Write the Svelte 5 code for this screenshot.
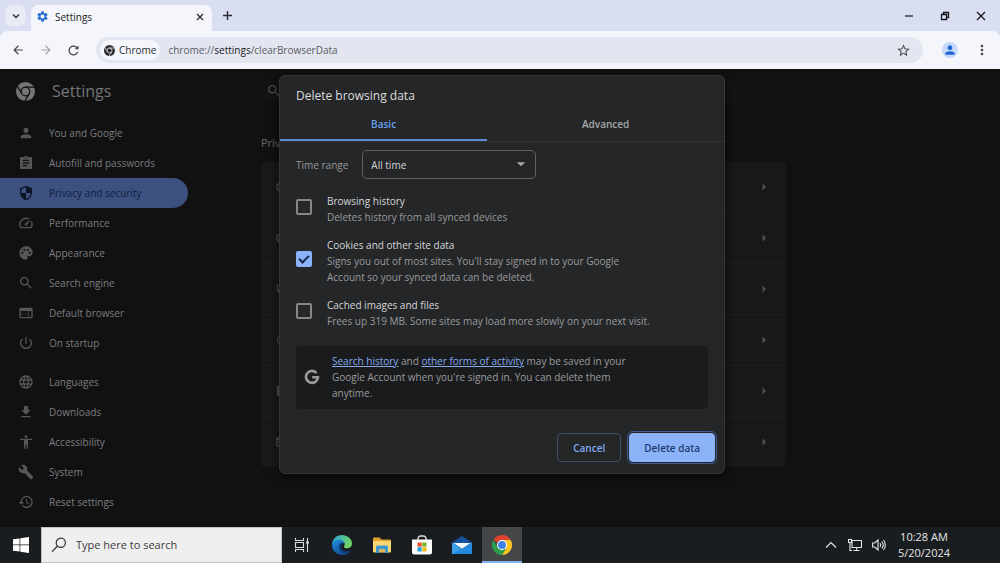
<script lang="ts">
    const icons = {
        person: 'M12 12c2.21 0 4-1.79 4-4s-1.79-4-4-4-4 1.79-4 4 1.79 4 4 4zm0 2c-2.67 0-8 1.34-8 4v2h16v-2c0-2.66-5.33-4-8-4z',
        assignment: 'M19 3h-4.18C14.4 1.84 13.3 1 12 1c-1.3 0-2.4.84-2.82 2H5c-1.1 0-2 .9-2 2v14c0 1.1.9 2 2 2h14c1.1 0 2-.9 2-2V5c0-1.1-.9-2-2-2zm-7 0c.55 0 1 .45 1 1s-.45 1-1 1-1-.45-1-1 .45-1 1-1zm2 14H7v-2h7v2zm3-4H7v-2h10v2zm0-4H7V7h10v2z',
        security: 'M12 1L3 5v6c0 5.55 3.84 10.74 9 12 5.16-1.26 9-6.45 9-12V5l-9-4zm0 10.99h7c-.53 4.12-3.28 7.79-7 8.94V12H5V6.3l7-3.11v8.8z',
        speed: 'M20.38 8.57l-1.23 1.85a8 8 0 0 1-.22 7.58H5.07A8 8 0 0 1 15.58 6.85l1.85-1.23A10 10 0 0 0 3.35 19a2 2 0 0 0 1.72 1h13.85a2 2 0 0 0 1.74-1 10 10 0 0 0-.27-10.44zm-9.79 6.84a2 2 0 0 0 2.83 0l5.66-8.49-8.49 5.66a2 2 0 0 0 0 2.83z',
        palette: 'M12 2C6.49 2 2 6.49 2 12s4.49 10 10 10c1.38 0 2.5-1.12 2.5-2.5 0-.61-.23-1.2-.64-1.67-.08-.1-.13-.21-.13-.33 0-.28.22-.5.5-.5H16c3.31 0 6-2.69 6-6 0-4.96-4.49-9-10-9zm5.5 11c-.83 0-1.5-.67-1.5-1.5s.67-1.5 1.5-1.5 1.5.67 1.5 1.5-.67 1.5-1.5 1.5zm-3-4c-.83 0-1.5-.67-1.5-1.5S13.67 6 14.5 6s1.5.67 1.5 1.5S15.33 9 14.5 9zM5 11.5c0-.83.67-1.5 1.5-1.5s1.5.67 1.5 1.5S7.33 13 6.5 13 5 12.33 5 11.5zm6-4c0 .83-.67 1.5-1.5 1.5S8 8.33 8 7.5 8.67 6 9.5 6s1.5.67 1.5 1.5z',
        search: 'M15.5 14h-.79l-.28-.27C15.41 12.59 16 11.11 16 9.5 16 5.91 13.09 3 9.5 3S3 5.91 3 9.5 5.91 16 9.5 16c1.61 0 3.09-.59 4.23-1.57l.27.28v.79l5 4.99L20.49 19l-4.99-5zm-6 0C7.01 14 5 11.99 5 9.5S7.01 5 9.5 5 14 7.01 14 9.5 11.99 14 9.5 14z',
        web: 'M20 4H4c-1.1 0-1.99.9-1.99 2L2 18c0 1.1.9 2 2 2h16c1.1 0 2-.9 2-2V6c0-1.1-.9-2-2-2zm-5 14H4v-4h11v4zm0-5H4V9h11v4zm5 5h-4V9h4v9z',
        power: 'M13 3h-2v10h2V3zm4.83 2.17l-1.42 1.42C17.99 7.86 19 9.81 19 12c0 3.87-3.13 7-7 7s-7-3.13-7-7c0-2.19 1.01-4.14 2.58-5.42L6.17 5.17C4.23 6.82 3 9.26 3 12c0 4.97 4.03 9 9 9s9-4.03 9-9c0-2.74-1.23-5.18-3.17-6.83z',
        language: 'M11.99 2C6.47 2 2 6.48 2 12s4.47 10 9.99 10C17.52 22 22 17.52 22 12S17.52 2 11.99 2zm6.93 6h-2.95c-.32-1.25-.78-2.45-1.38-3.56 1.84.63 3.37 1.91 4.33 3.56zM12 4.04c.83 1.2 1.48 2.53 1.91 3.96h-3.82c.43-1.43 1.08-2.76 1.91-3.96zM4.26 14C4.1 13.36 4 12.69 4 12s.1-1.36.26-2h3.38c-.08.66-.14 1.32-.14 2s.06 1.34.14 2H4.26zm.82 2h2.95c.32 1.25.78 2.45 1.38 3.56-1.84-.63-3.37-1.9-4.33-3.56zm2.95-8H5.08c.96-1.66 2.49-2.93 4.33-3.56C8.81 5.55 8.35 6.75 8.03 8zM12 19.96c-.83-1.2-1.48-2.53-1.91-3.96h3.82c-.43 1.43-1.08 2.76-1.91 3.96zM14.34 14H9.66c-.09-.66-.16-1.32-.16-2s.07-1.35.16-2h4.68c.09.65.16 1.32.16 2s-.07 1.34-.16 2zm.25 5.56c.6-1.11 1.06-2.31 1.38-3.56h2.95c-.96 1.65-2.49 2.93-4.33 3.56zM16.36 14c.08-.66.14-1.32.14-2s-.06-1.34-.14-2h3.38c.16.64.26 1.31.26 2s-.1 1.36-.26 2h-3.38z',
        download: 'M19 9h-4V3H9v6H5l7 7 7-7zM5 18v2h14v-2H5z',
        accessibility: 'M12 2c1.1 0 2 .9 2 2s-.9 2-2 2-2-.9-2-2 .9-2 2-2zm9 7h-6v13h-2v-6h-2v6H9V9H3V7h18v2z',
        build: 'M22.7 19l-9.1-9.1c.9-2.3.4-5-1.5-6.9-2-2-5-2.4-7.4-1.3L9 6 6 9 1.6 4.7C.4 7.1.9 10.1 2.9 12.1c1.9 1.9 4.6 2.4 6.9 1.5l9.1 9.1c.4.4 1 .4 1.4 0l2.3-2.3c.5-.4.5-1.1.1-1.4z',
        restore: 'M13 3c-4.97 0-9 4.03-9 9H1l3.89 3.89.07.14L9 12H6c0-3.87 3.13-7 7-7s7 3.13 7 7-3.13 7-7 7c-1.93 0-3.68-.79-4.94-2.06l-1.42 1.42C8.27 19.99 10.51 21 13 21c4.97 0 9-4.03 9-9s-4.03-9-9-9zm-1 5v5l4.28 2.54.72-1.21-3.5-2.08V8H12z',
        gear: 'M19.14 12.94c.04-.3.06-.61.06-.94 0-.32-.02-.64-.07-.94l2.03-1.58c.18-.14.23-.41.12-.61l-1.92-3.32c-.12-.22-.37-.29-.59-.22l-2.39.96c-.5-.38-1.03-.7-1.62-.94l-.36-2.54c-.04-.24-.24-.41-.48-.41h-3.84c-.24 0-.43.17-.47.41l-.36 2.54c-.59.24-1.13.57-1.62.94l-2.39-.96c-.22-.08-.47 0-.59.22L2.74 8.87c-.12.21-.08.47.12.61l2.03 1.58c-.05.3-.09.63-.09.94s.02.64.07.94l-2.03 1.58c-.18.14-.23.41-.12.61l1.92 3.32c.12.22.37.29.59.22l2.39-.96c.5.38 1.03.7 1.62.94l.36 2.54c.05.24.24.41.48.41h3.84c.24 0 .44-.17.47-.41l.36-2.54c.59-.24 1.13-.56 1.62-.94l2.39.96c.22.08.47 0 .59-.22l1.92-3.32c.12-.22.07-.47-.12-.61l-2.01-1.58zM12 15.6c-1.98 0-3.6-1.62-3.6-3.6s1.62-3.6 3.6-3.6 3.6 1.62 3.6 3.6-1.62 3.6-3.6 3.6z',
        back: 'M20 11H7.83l5.59-5.59L12 4l-8 8 8 8 1.41-1.41L7.83 13H20v-2z',
        forward: 'M12 4l-1.41 1.41L16.17 11H4v2h12.17l-5.58 5.59L12 20l8-8z',
        reload: 'M17.65 6.35C16.2 4.9 14.21 4 12 4c-4.42 0-7.99 3.58-7.99 8s3.57 8 7.99 8c3.73 0 6.84-2.55 7.73-6h-2.08c-.82 2.33-3.04 4-5.65 4-3.31 0-6-2.69-6-6s2.69-6 6-6c1.66 0 3.14.69 4.22 1.78L14 10h6V4l-2.35 2.35z',
        star: 'M22 9.24l-7.19-.62L12 2 9.19 8.63 2 9.24l5.46 4.73L5.82 21 12 17.27 18.18 21l-1.63-7.03L22 9.24zM12 15.4l-3.76 2.27 1-4.28-3.32-2.88 4.38-.38L12 6.1l1.71 4.04 4.38.38-3.32 2.88 1 4.28L12 15.4z',
        dots: 'M12 8c1.1 0 2-.9 2-2s-.9-2-2-2-2 .9-2 2 .9 2 2 2zm0 2c-1.1 0-2 .9-2 2s.9 2 2 2 2-.9 2-2-.9-2-2-2zm0 6c-1.1 0-2 .9-2 2s.9 2 2 2 2-.9 2-2-.9-2-2-2z',
        dropdown: 'M5 9l7 7 7-7z',
        arrowRight: 'M9 5v14l7-7z'
    };

    const mainLinks = [
        { text: 'You and Google', icon: icons.person },
        { text: 'Autofill and passwords', icon: icons.assignment },
        { text: 'Privacy and security', icon: icons.security },
        { text: 'Performance', icon: icons.speed },
        { text: 'Appearance', icon: icons.palette },
        { text: 'Search engine', icon: icons.search },
        { text: 'Default browser', icon: icons.web },
        { text: 'On startup', icon: icons.power }
    ];

    const moreLinks = [
        { text: 'Languages', icon: icons.language },
        { text: 'Downloads', icon: icons.download },
        { text: 'Accessibility', icon: icons.accessibility },
        { text: 'System', icon: icons.build },
        { text: 'Reset settings', icon: icons.restore }
    ];

    const rowIcons = [icons.language, icons.language, icons.security, icons.power, icons.assignment, icons.web];

    let selectedLink = $state('Privacy and security');
    let selectedTab = $state('Basic');
    let timeRange = $state('All time');

    let options = $state([
        { id: 'history', title: 'Browsing history', text: 'Deletes history from all synced devices', checked: false },
        { id: 'cookies', title: 'Cookies and other site data', text: "Signs you out of most sites. You'll stay signed in to your Google Account so your synced data can be deleted.", checked: true },
        { id: 'cache', title: 'Cached images and files', text: 'Frees up 319 MB. Some sites may load more slowly on your next visit.', checked: false }
    ]);
</script>

{#snippet icon(path: string, size = 16)}
    <svg width={size} height={size} viewBox="0 0 24 24" fill="currentColor" aria-hidden="true"><path d={path} /></svg>
{/snippet}

{#snippet chromeMark(id: string, size: number)}
    <svg width={size} height={size} viewBox="0 0 24 24" aria-hidden="true">
        <mask {id}>
            <circle cx="12" cy="12" r="12" fill="#fff" />
            <g fill="none" stroke="#000" stroke-width="1.6">
                <circle cx="12" cy="12" r="5.4" />
                <path d="M12 6.6H24M7.3 14.7L1.3 4.3M16.7 14.7L10.7 25.1" />
            </g>
        </mask>
        <rect width="24" height="24" fill="currentColor" mask="url(#{id})" />
    </svg>
{/snippet}

{#snippet menu(links: { text: string; icon: string }[])}
    <ul>
        {#each links as link}
            <li>
                <a href="#settings" class:marked={selectedLink === link.text} onclick={() => (selectedLink = link.text)}>
                    {@render icon(link.icon)}
                    <span>{link.text}</span>
                </a>
            </li>
        {/each}
    </ul>
{/snippet}

<div class="screen">
    <header>
        <div class="tabstrip">
            <button class="tab-search" aria-label="Search tabs">
                <svg width="8" height="8" viewBox="0 0 8 8" fill="none" stroke="currentColor" stroke-width="1.4"><path d="M1 2.5l3 3 3-3" /></svg>
            </button>
            <div class="tab">
                <span class="gear">{@render icon(icons.gear, 13)}</span>
                <span class="tab-title">Settings</span>
                <button aria-label="Close tab">
                    <svg width="8" height="8" viewBox="0 0 8 8" stroke="currentColor" stroke-width="1.3"><path d="M1 1l6 6M7 1L1 7" /></svg>
                </button>
            </div>
            <button class="new-tab" aria-label="New tab">
                <svg width="9" height="9" viewBox="0 0 9 9" stroke="currentColor" stroke-width="1.4"><path d="M4.5 0v9M0 4.5h9" /></svg>
            </button>
            <div class="window-buttons">
                <button aria-label="Minimize">
                    <svg width="10" height="10" viewBox="0 0 10 10" stroke="currentColor" stroke-width="1.2"><path d="M1 5h8" /></svg>
                </button>
                <button aria-label="Restore">
                    <svg width="10" height="10" viewBox="0 0 10 10" fill="none" stroke="currentColor" stroke-width="1.3"><path d="M1.5 3.5h5v5h-5zM3.5 3V1.5h5v5H7" /></svg>
                </button>
                <button aria-label="Close">
                    <svg width="10" height="10" viewBox="0 0 10 10" stroke="currentColor" stroke-width="1.2"><path d="M1 1l8 8M9 1L1 9" /></svg>
                </button>
            </div>
        </div>

        <div class="toolbar">
            <button aria-label="Back">{@render icon(icons.back, 14)}</button>
            <button aria-label="Forward" disabled>{@render icon(icons.forward, 14)}</button>
            <button aria-label="Reload">{@render icon(icons.reload, 15)}</button>
            <div class="omnibox">
                <span class="chip">{@render chromeMark('chip-mark', 11)}Chrome</span>
                <span class="url">chrome://<b>settings</b>/clearBrowserData</span>
                <button aria-label="Bookmark this tab">{@render icon(icons.star, 15)}</button>
            </div>
            <button class="avatar" aria-label="Profile">{@render icon(icons.person, 14)}</button>
            <button aria-label="More">{@render icon(icons.dots, 16)}</button>
        </div>
    </header>

    <div class="page">
        <aside>
            <h1>{@render chromeMark('page-mark', 19)}<span>Settings</span></h1>
            <nav>
                {@render menu(mainLinks)}
                {@render menu(moreLinks)}
            </nav>
        </aside>

        <main>
            <div class="page-search">{@render icon(icons.search)}</div>
            <h2>Privacy and security</h2>
            <div class="card">
                {#each rowIcons as rowIcon}
                    <div class="card-row">
                        {@render icon(rowIcon, 14)}
                        {@render icon(icons.arrowRight, 12)}
                    </div>
                {/each}
            </div>
        </main>

        <div class="overlay">
            <div class="modal" role="dialog" aria-labelledby="modal-title">
                <h2 id="modal-title">Delete browsing data</h2>
                <div class="tabs" role="tablist">
                    {#each ['Basic', 'Advanced'] as tab}
                        <button role="tab" aria-selected={selectedTab === tab} class={tab.toLowerCase()} class:current={selectedTab === tab} onclick={() => (selectedTab = tab)}>{tab}</button>
                    {/each}
                </div>

                <div class="modal-body">
                    <div class="range">
                        <label for="range">Time range</label>
                        <div class="select">
                            <select id="range" bind:value={timeRange}>
                                <option>Last hour</option>
                                <option>Last 24 hours</option>
                                <option>Last 7 days</option>
                                <option>Last 4 weeks</option>
                                <option>All time</option>
                            </select>
                            {@render icon(icons.dropdown, 14)}
                        </div>
                    </div>

                    <div class="options">
                        {#each options as option}
                            <div class="option">
                                <input type="checkbox" id={option.id} bind:checked={option.checked} />
                                <label for={option.id}>
                                    <strong>{option.title}</strong>
                                    <span>{option.text}</span>
                                </label>
                            </div>
                        {/each}
                    </div>

                    <div class="info">
                        <svg width="16" height="16" viewBox="0 0 16 16" fill="none" stroke="currentColor" stroke-width="2.6" aria-hidden="true">
                            <path d="M12.6 4A6 6 0 1 0 14 8.2H8.2" />
                        </svg>
                        <p>
                            <a href="#history">Search history</a> and <a href="#activity">other forms of activity</a> may be saved in your
                            Google Account when you're signed in. You can delete them anytime.
                        </p>
                    </div>

                    <div class="actions">
                        <button class="cancel">Cancel</button>
                        <button class="delete">Delete data</button>
                    </div>
                </div>
            </div>
        </div>
    </div>

    <footer>
        <button class="start" aria-label="Start">
            <svg width="16" height="16" viewBox="0 0 16 16" fill="#fff"><path d="M0 2.3l6.6-.9v6.2H0zM7.3 1.3L16 0v7.6H7.3zM0 8.3h6.6v6.3L0 13.7zM7.3 8.3H16V16l-8.7-1.3z" /></svg>
        </button>
        <label class="task-search">
            <svg width="16" height="16" viewBox="0 0 16 16" fill="none" stroke="#333" stroke-width="1.2"><circle cx="9.8" cy="5.8" r="4.6" /><path d="M6.5 9L1 14.6" /></svg>
            <input type="text" placeholder="Type here to search" />
        </label>
        <div class="apps">
            <button aria-label="Task View">
                <svg width="16" height="16" viewBox="0 0 16 16" fill="none" stroke="#dcdcdc" stroke-width="1.1">
                    <path d="M1.5 1v2.5h8V1M1.5 15v-2.5h8V15M1.5 5.5h8v5h-8zM13.5 1v14" /><path d="M12.2 5.5h2.6" stroke-width="2.4" />
                </svg>
            </button>
            <button aria-label="Microsoft Edge">
                <svg width="20" height="20" viewBox="0 0 20 20">
                    <defs>
                        <linearGradient id="edge-top" x1="0" y1="0" x2="1" y2="0.4"><stop offset="0" stop-color="#2aa5e0" /><stop offset="1" stop-color="#6fd562" /></linearGradient>
                        <linearGradient id="edge-low" x1="0" y1="0" x2="0.6" y2="1"><stop offset="0" stop-color="#1f8fe0" /><stop offset="1" stop-color="#114a94" /></linearGradient>
                    </defs>
                    <path d="M0 10C0 4 4.5 0 10 0s10 4 10 8.5c0 3-2.3 4.8-5 4.8-2.2 0-3.2-.8-3.2-1.5 0-.5.9-1 .9-2.3C12.7 7.4 10.7 6 8 6 4 6 1 8 0 10z" fill="url(#edge-top)" />
                    <path d="M0 10c.5-3.6 4-5.2 7-5.2 3.5 0 5.700 2 5.700 4.700C12 8.200 11 7.900 9.800 7.900 8 8.500 7 10 7 12c0 3.500 3 6 7 6 1.500 0 3-.5 4.200-1.400C16.400 18.700 13.500 20 10.300 20 4.500 20 0 15.500 0 10z" fill="url(#edge-low)" />
                    <path d="M9.800 7.900C8 8.500 7 10 7 12c0 3.500 3 6 7 6 1.500 0 3-.5 4.200-1.400.5-.6-.1-1.100-.7-.8-3.500 1.400-8.200.2-8.200-4 0-1.700.8-3 1.700-3.500a3 3 0 0 0-1.200-.4z" fill="#0d3f80" />
                </svg>
            </button>
            <button aria-label="File Explorer">
                <svg width="20" height="18" viewBox="0 0 20 18">
                    <path d="M1 2.5A1 1 0 0 1 2 1.5h5.5l2 2H18a1 1 0 0 1 1 1V9H1z" fill="#e0a030" />
                    <path d="M1 5h18v10.5a1 1 0 0 1-1 1H2a1 1 0 0 1-1-1z" fill="#f9d673" />
                    <path d="M4 17v-6a1.5 1.5 0 0 1 1.5-1.5h9A1.5 1.5 0 0 1 16 11v6h-3v-3.500H7V17z" fill="#3f97cf" />
                    <path d="M7 13.5h6v2.5H7z" fill="#e5b64b" />
                </svg>
            </button>
            <button aria-label="Microsoft Store">
                <svg width="20" height="20" viewBox="0 0 20 20">
                    <path d="M6 6V3.5A2.5 2.5 0 0 1 8.5 1h3A2.5 2.5 0 0 1 14 3.5V6" fill="none" stroke="#ddd" stroke-width="1.4" />
                    <path d="M0 4.5h20v13a2 2 0 0 1-2 2H2a2 2 0 0 1-2-2z" fill="#fafafa" />
                    <path d="M5.5 7.5h4.2v4.2H5.5z" fill="#e9512a" /><path d="M10.3 7.5h4.2v4.2h-4.2z" fill="#76b52c" />
                    <path d="M5.5 12.3h4.2v4.2H5.5z" fill="#1c9fe0" /><path d="M10.3 12.3h4.2v4.2h-4.2z" fill="#f9b61a" />
                </svg>
            </button>
            <button aria-label="Mail">
                <svg width="20" height="20" viewBox="0 0 20 20">
                    <path d="M0 7.5L10 1l10 6.5V12H0z" fill="#15509e" />
                    <path d="M0 7.5l10 6.7 10-6.7V19H0z" fill="#3ba0ea" />
                    <path d="M0 19l13-7L20 7.5V19z" fill="#2389dc" />
                    <path d="M1.5 8h17L10 13.8z" fill="#f2f8fd" />
                </svg>
            </button>
            <button class="running" aria-label="Google Chrome">
                <svg width="20" height="20" viewBox="0 0 24 24">
                    <path d="M12 12L1.6 6A12 12 0 0 1 22.4 6z" fill="#e0412f" />
                    <path d="M12 6h10.4A12 12 0 0 1 12 24l5.2-9z" fill="#fbc524" />
                    <path d="M6.8 15L1.6 6A12 12 0 0 0 12 24l5.2-9z" fill="#2d9c4c" />
                    <circle cx="12" cy="12" r="6" fill="#fff" />
                    <circle cx="12" cy="12" r="4.7" fill="#3d7fe8" />
                </svg>
            </button>
        </div>
        <div class="tray">
            <button aria-label="Show hidden icons">
                <svg width="12" height="12" viewBox="0 0 12 12" fill="none" stroke="currentColor" stroke-width="1.2"><path d="M1 8.5l5-5 5 5" /></svg>
            </button>
            <button aria-label="Network">
                <svg width="14" height="14" viewBox="0 0 14 14" fill="none" stroke="currentColor" stroke-width="1.1"><path d="M4 2.5h9.5v7H4zM8.7 9.5v3M5.5 12.5h6M.5 1.5h3v3h-3zM2 4.5v8h2" /></svg>
            </button>
            <button aria-label="Volume">
                <svg width="14" height="14" viewBox="0 0 14 14" fill="none" stroke="currentColor" stroke-width="1.1"><path d="M.6 5h2.2L6 2v10L2.8 9H.6zM8 5.2c.8 1 .8 2.6 0 3.6M9.8 3.6c1.7 2 1.7 4.8 0 6.8M11.5 2c2.4 2.8 2.4 7.2 0 10" /></svg>
            </button>
            <div class="clock"><span>10:28 AM</span><span>5/20/2024</span></div>
        </div>
    </footer>
</div>

<style>
    :global(body) {
        margin: 0;
        background: #111112;
    }

    .screen {
        min-height: 100vh;
        display: flex;
        flex-direction: column;
        font-family: "Segoe UI", "Open Sans", "Noto Sans", sans-serif;
        font-size: 10px;
        line-height: 16px;
        color: #9a9b9d;
    }

    h1, h2, p, ul {
        margin: 0;
        padding: 0;
        list-style: none;
        font-weight: 400;
    }

    button, input, select {
        margin: 0;
        padding: 0;
        border: none;
        background: none;
        color: inherit;
        font: inherit;
    }

    button {
        display: flex;
        justify-content: center;
        align-items: center;
    }

    svg {
        display: block;
        flex: none;
    }

    header {
        background: #d9def0;
    }

    .tabstrip {
        display: flex;
        align-items: flex-start;
        height: 31px;
        padding-right: 1px;
        color: #2b2d33;
    }

    .tab-search {
        width: 21px;
        height: 21px;
        margin: 5px 5px 0;
        border-radius: 7px;
        background: #e8ebf6;
    }

    .tab {
        display: flex;
        align-items: center;
        gap: 6px;
        box-sizing: border-box;
        width: 181px;
        height: 26px;
        margin-top: 5px;
        padding: 0 8px 3px 5px;
        border-radius: 8px 8px 0 0;
        background: #f4f6fc;
    }

    .gear {
        color: #2a72cf;
    }

    .tab-title {
        flex: 1;
        color: #202226;
    }

    .new-tab {
        width: 21px;
        height: 21px;
        margin: 5px;
    }

    .window-buttons {
        display: flex;
        margin-left: auto;
        color: #15161a;
    }

    .window-buttons > button {
        width: 36px;
        height: 31px;
    }

    .toolbar {
        display: flex;
        align-items: center;
        gap: 7px;
        height: 38px;
        padding: 0 8px 0 7px;
        border-radius: 8px 8px 0 0;
        background: #f4f6fc;
        color: #45474c;
    }

    .toolbar > button {
        width: 21px;
        height: 21px;
    }

    .toolbar > button:disabled {
        color: #a3a5ac;
    }

    .omnibox {
        display: flex;
        flex: 1;
        align-items: center;
        gap: 8px;
        height: 26px;
        margin: 0 12px 0 5px;
        padding: 0 12px 0 4px;
        border-radius: 13px;
        background: #e3e5f0;
    }

    .chip {
        display: flex;
        align-items: center;
        gap: 4px;
        padding: 2px 4px;
        border-radius: 10px;
        background: #f4f6fc;
        color: #2b2d33;
        font-weight: 500;
    }

    .url {
        flex: 1;
        color: #5a5c63;
    }

    .url > b {
        color: #202226;
        font-weight: 400;
    }

    .toolbar > .avatar {
        width: 16px;
        height: 16px;
        margin-right: 6px;
        border-radius: 50%;
        background: #c6dafb;
        color: #1f66cf;
    }

    .page {
        position: relative;
        display: flex;
        flex: 1;
        background: #111112;
    }

    aside {
        flex: 0 0 188px;
        margin-right: 73px;
    }

    h1 {
        display: flex;
        align-items: center;
        gap: 17px;
        height: 44px;
        padding: 0 0 5px 16px;
        color: #747577;
        font-size: 16px;
        font-weight: 500;
    }

    nav > ul + ul {
        margin-top: 9px;
    }

    nav a {
        display: flex;
        align-items: center;
        gap: 15px;
        height: 30px;
        padding-left: 18px;
        border-radius: 0 15px 15px 0;
        color: #555658;
        font-weight: 500;
        text-decoration: none;
    }

    nav a > span {
        color: #7c7d7f;
    }

    nav .marked {
        background: #3c5180;
        color: #0b1424;
    }

    nav .marked > span {
        color: #10203f;
    }

    main {
        flex: 0 1 525px;
        padding: 11px 0 24px;
    }

    .page-search {
        padding: 3px 5px;
        border-radius: 11px;
        background: #131314;
        color: #4a4b4d;
    }

    main > h2 {
        padding: 33px 0 11px;
        color: #68696b;
        font-size: 11px;
    }

    .card {
        border-radius: 4px;
        background: #16181a;
    }

    .card-row {
        display: flex;
        justify-content: space-between;
        align-items: center;
        height: 50px;
        padding: 0 16px 0 14px;
        color: #505153;
    }

    .card-row + .card-row {
        border-top: 1px solid #1c1e20;
    }

    .overlay {
        position: absolute;
        inset: 0;
        display: flex;
        justify-content: center;
        align-items: flex-start;
        padding: 6px 0 0 4px;
    }

    .modal {
        width: 444px;
        border: 1px solid #343638;
        border-radius: 6px;
        background: #242628;
        box-shadow: 0 2px 8px #000a;
    }

    .modal > h2 {
        padding: 11px 16px 7px;
        color: #dcddde;
        font-size: 12px;
        line-height: 18px;
    }

    .tabs {
        display: flex;
        border-bottom: 1px solid #303235;
    }

    .tabs > button {
        height: 29px;
        padding-bottom: 3px;
        border-bottom: 2px solid transparent;
        font-weight: 600;
        color: #a5a6a8;
    }

    .tabs > .basic {
        flex: 7;
    }

    .tabs > .advanced {
        flex: 8;
    }

    .tabs > .current {
        border-color: #5a8bd0;
        color: #6ba0ee;
    }

    .modal-body {
        padding: 8px 16px 11px;
    }

    .range {
        display: flex;
        align-items: center;
        gap: 14px;
    }

    .select {
        position: relative;
    }

    .select > select {
        appearance: none;
        width: 174px;
        height: 29px;
        padding: 0 24px 0 8px;
        border: 1px solid #606265;
        border-radius: 5px;
        color: #d6d7d9;
    }

    .select > :global(svg) {
        position: absolute;
        top: 7px;
        right: 8px;
        color: #a8a9ab;
        pointer-events: none;
    }

    .options {
        display: flex;
        flex-direction: column;
        gap: 12px;
        padding: 14px 0 17px;
    }

    .option {
        display: flex;
        align-items: center;
        gap: 15px;
    }

    .option > input {
        appearance: none;
        display: grid;
        place-items: center;
        flex: none;
        width: 16px;
        height: 16px;
        margin-bottom: 4px;
        border: 2px solid #858688;
        border-radius: 2px;
    }

    .option > input:checked {
        border-color: #8cb2f8;
        background: #8cb2f8;
    }

    .option > input:checked::after {
        content: "";
        width: 8px;
        height: 4px;
        margin-bottom: 3px;
        border: solid #14284c;
        border-width: 0 0 2px 2px;
        transform: rotate(-45deg);
    }

    .option > label {
        max-width: 330px;
    }

    .option strong {
        display: block;
        color: #d6d7d9;
        font-weight: 400;
    }

    #cookies + label {
        max-width: 310px;
    }

    .info {
        display: flex;
        align-items: center;
        gap: 12px;
        padding: 7px 8px 8px;
        border-radius: 4px;
        background: #1a1b1d;
    }

    .info > p {
        max-width: 305px;
    }

    .info a {
        color: #84aaea;
    }

    .actions {
        display: flex;
        justify-content: flex-end;
        gap: 8px;
        margin: 24px -7px 0 0;
    }

    .actions > button {
        height: 29px;
        padding: 0 15px;
        border: 1px solid #3c4f6c;
        border-radius: 4px;
        color: #7eaaf2;
        font-weight: 600;
    }

    .actions > .delete {
        padding: 0 14px;
        border-color: #8cb2f8;
        outline: 1px solid #3d5d94;
        outline-offset: 1px;
        background: #8cb2f8;
        color: #1d3a70;
    }

    footer {
        display: flex;
        height: 36px;
        background: #191d1f;
        color: #e4e5e6;
        font-size: 11px;
    }

    .start {
        width: 41px;
    }

    .task-search {
        display: flex;
        align-items: center;
        gap: 9px;
        box-sizing: border-box;
        width: 241px;
        padding-left: 9px;
        border: 1px solid #c4c4c4;
        background: #efefef;
    }

    .task-search > input {
        flex: 1;
        min-width: 0;
        color: #3c3c3c;
    }

    .task-search > input::placeholder {
        color: #3c3c3c;
        opacity: 1;
    }

    .apps {
        display: flex;
    }

    .apps > button {
        width: 40px;
    }

    .apps > .running {
        box-sizing: border-box;
        border-top: 2px solid #444648;
        border-bottom: 2px solid #7fb0ec;
        background: #444648;
    }

    .tray {
        display: flex;
        align-items: center;
        margin-left: auto;
        padding-right: 43px;
    }

    .tray > button {
        width: 24px;
        height: 36px;
    }

    .clock {
        display: flex;
        flex-direction: column;
        width: 66px;
        align-items: center;
    }
</style>
